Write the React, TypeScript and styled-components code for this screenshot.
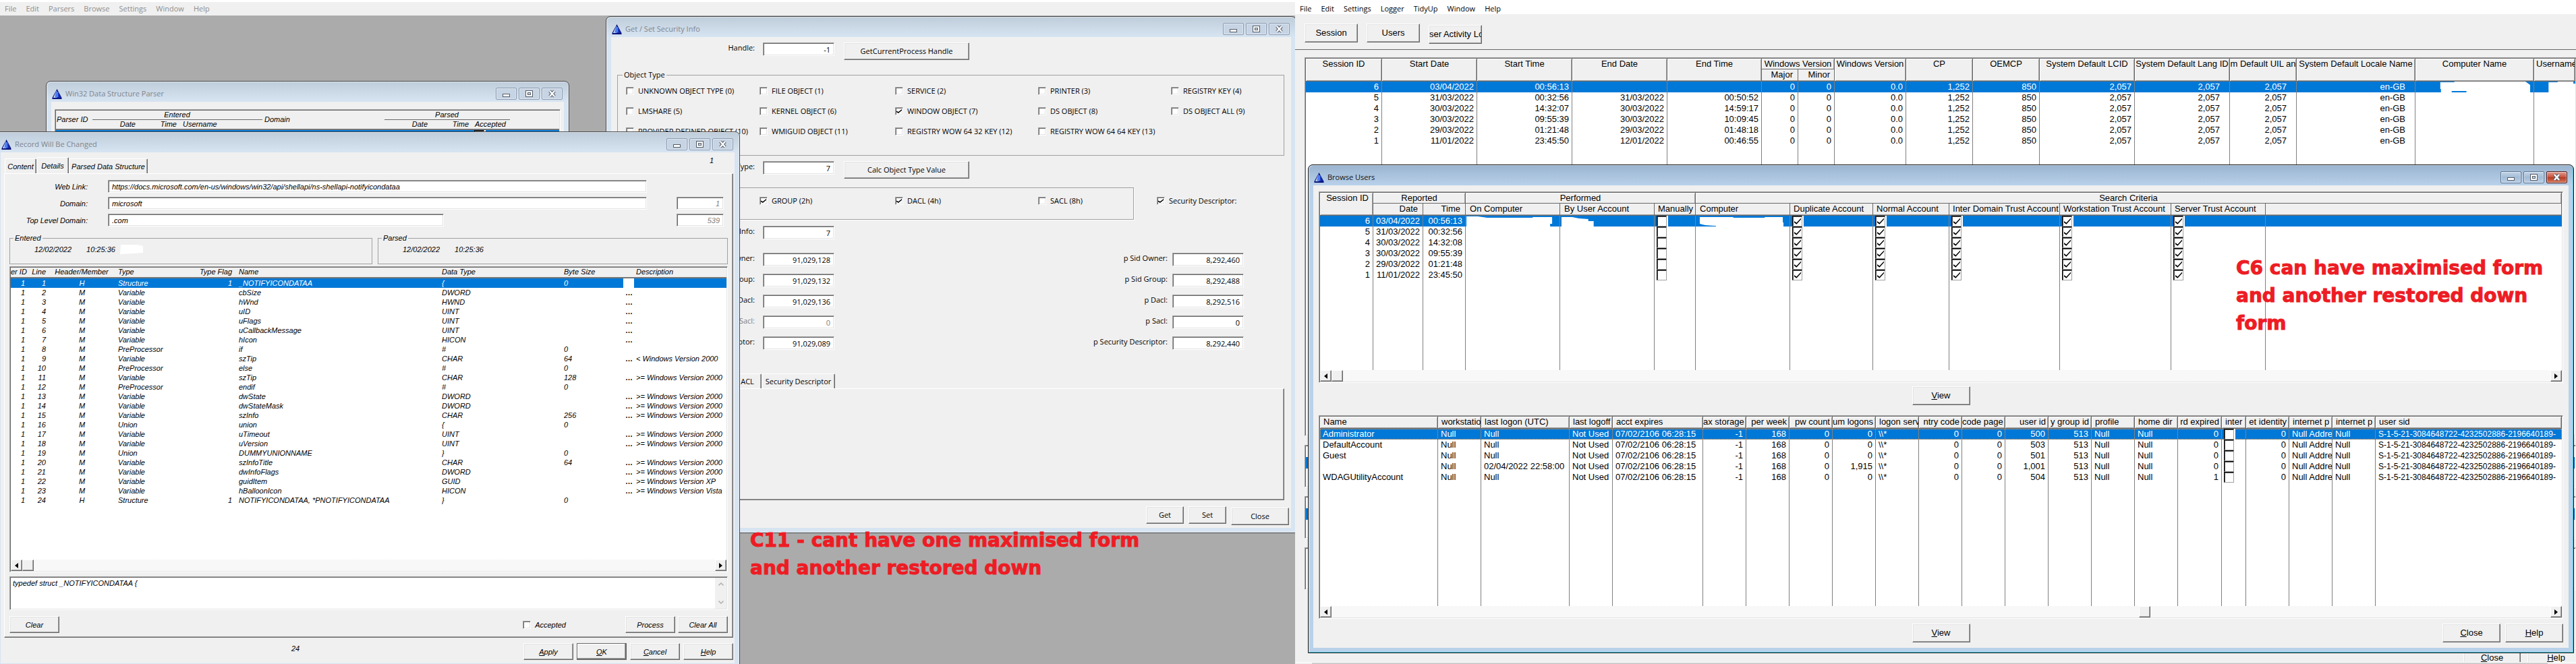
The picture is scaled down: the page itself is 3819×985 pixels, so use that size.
import React from "react";
import styled, { createGlobalStyle, css } from "styled-components";

const FACE = "#f0f0f0";
const DARK = "#696969";
const SHADE = "#a0a0a0";
const LIGHT = "#e3e3e3";
const BLUE = "#0078d7";
const UI = '"Open Sans", "Noto Sans", sans-serif';
const ARIAL = '"Liberation Sans", Arial, sans-serif';

const Global = createGlobalStyle`
  * { box-sizing: border-box; }
  body { margin: 0; background: ${FACE}; color: #000; overflow: hidden; }
  button, input, textarea { font: inherit; color: inherit; margin: 0; }
`;

const sunken = css`
  border: 1px solid;
  border-color: ${SHADE} #fff #fff ${SHADE};
  box-shadow: inset 1px 1px ${DARK}, inset -1px -1px ${LIGHT};
`;

const Screen = styled.div`
  display: grid;
  grid-template-columns: 1920fr 1899fr;
  grid-template-rows: minmax(0, 1fr);
  height: 100vh;
  overflow: hidden;
`;

const Pane = styled.section`
  position: relative;
  display: flex;
  flex-direction: column;
  min-width: 0;
  min-height: 0;
  overflow: hidden;
`;

const MenuBar = styled.nav<{ $dim?: boolean }>`
  display: flex;
  align-items: center;
  flex: none;
  height: ${(p) => (p.$dim ? 23 : 21)}px;
  border-top: ${(p) => (p.$dim ? "3px solid #fff" : "0")};
  padding-top: ${(p) => (p.$dim ? 0 : 4)}px;
  background: ${(p) => (p.$dim ? FACE : "#fff")};
  color: ${(p) => (p.$dim ? "#8e8e8e" : "#000")};
  font: 11px/16px ${UI};
`;

const MenuItem = styled.button`
  border: 0;
  background: none;
  padding: 0 7px;
`;

const Desktop = styled.div`
  position: relative;
  flex: 1;
  background: #ababab;
  overflow: hidden;
`;

/* ---------- window chrome ---------- */

const Frame = styled.article<{ $x: number; $y: number; $w: number; $h: number; $active?: boolean }>`
  position: absolute;
  left: ${(p) => p.$x}px;
  top: ${(p) => p.$y}px;
  width: ${(p) => p.$w}px;
  height: ${(p) => p.$h}px;
  display: flex;
  flex-direction: column;
  padding: 0 7px 7px;
  border: 1px solid ${(p) => (p.$active ? "#111" : "#4a4a4a")};
  border-radius: 7px 7px 0 0;
  background: ${(p) => (p.$active ? "linear-gradient(#9ab4d0, #b9d1ea 30px)" : "linear-gradient(#bfcddb, #d7e4f2 30px)")};
  box-shadow: inset 1px 1px rgba(255, 255, 255, 0.5), inset -1px -1px ${(p) => (p.$active ? "#45c8de" : "rgba(255,255,255,.4)")};
`;

const TitleBar = styled.header<{ $active?: boolean }>`
  display: flex;
  align-items: center;
  flex: none;
  height: 30px;
  padding: 6px 2px 0 1px;
  gap: 5px;
  color: ${(p) => (p.$active ? "#111" : "#80868c")};
`;

const Title = styled.h2`
  flex: 1;
  margin: 0;
  font: 11px/18px ${UI};
`;

const Controls = styled.div`
  display: flex;
  gap: 3px;
`;

const ControlButton = styled.button<{ $close?: boolean; $active?: boolean }>`
  display: grid;
  place-items: center;
  width: 31px;
  height: 18px;
  padding: 0;
  border: 1px solid ${(p) => (p.$close ? "#4f1d1d" : p.$active ? "#5e7690" : "#8b9bb0")};
  border-radius: 2px;
  background: ${(p) =>
    p.$close ? "linear-gradient(#e0a096, #c84f3a 50%, #b23a22 51%, #d8785c)" : p.$active ? "linear-gradient(#c3d5e8, #a3bcd6 50%, #b9cfe6)" : "#c6d4e4"};
  box-shadow: inset 0 0 0 1px rgba(255, 255, 255, 0.45);
`;

const Client = styled.div`
  display: flex;
  flex-direction: column;
  flex: 1;
  min-height: 0;
  background: ${FACE};
`;

const Logo = () => (
  <svg width="15" height="15" viewBox="0 0 15 15" aria-hidden="true">
    <path d="M7.5 0 L14.5 13 V15 H0.5 V13 Z" fill="#0a1478" />
    <path d="M7 2 L7 13 H2 Z" fill="#e4ecff" />
    <path d="M6 4 L9 4 L12.500 12.500 H4 Z" fill="#4a7cf0" />
    <path d="M9 5 L13.500 13 H9.500 Z" fill="#1428b0" />
  </svg>
);

const Glyph = ({ kind }: { kind: "min" | "max" | "close" }) => (
  <svg width="13" height="12" viewBox="0 0 13 12" aria-hidden="true">
    {kind === "min" && <rect x="1.500" y="6.500" width="10" height="4" fill="#fff" stroke="#555c68" />}
    {kind === "max" && (
      <>
        <rect x="1.500" y="1.500" width="10" height="9" fill="#fff" stroke="#555c68" />
        <rect x="4.500" y="4.500" width="4" height="3" fill="#c6d4e4" stroke="#555c68" />
      </>
    )}
    {kind === "close" && (
      <>
        <path d="M3 2 L10 10 M10 2 L3 10" stroke="#555c68" strokeWidth="4.500" />
        <path d="M3 2 L10 10 M10 2 L3 10" stroke="#fff" strokeWidth="2.500" />
      </>
    )}
  </svg>
);

type WinProps = { title: string; x: number; y: number; w: number; h: number; active?: boolean; children: React.ReactNode };
const Win = ({ title, x, y, w, h, active, children }: WinProps) => (
  <Frame $x={x} $y={y} $w={w} $h={h} $active={active}>
    <TitleBar $active={active}>
      <Logo />
      <Title>{title}</Title>
      <Controls>
        <ControlButton aria-label="Minimise" $active={active}><Glyph kind="min" /></ControlButton>
        <ControlButton aria-label="Restore" $active={active}><Glyph kind="max" /></ControlButton>
        <ControlButton aria-label="Close window" $close={active}><Glyph kind="close" /></ControlButton>
      </Controls>
    </TitleBar>
    {children}
  </Frame>
);

/* ---------- controls ---------- */

const Button = styled.button<{ $w: number; $h?: number; $default?: boolean; $low?: boolean }>`
  flex: none;
  width: ${(p) => p.$w}px;
  height: ${(p) => p.$h ?? 25}px;
  padding: 0;
  border: 1px solid;
  border-color: #fff ${DARK} ${DARK} #fff;
  background: ${FACE};
  box-shadow: inset -1px -1px ${SHADE}, inset 1px 1px ${LIGHT};
  overflow: hidden;
  white-space: nowrap;
  align-self: ${(p) => (p.$low ? "flex-end" : "flex-start")};
  ${(p) =>
    p.$default &&
    css`
      border-color: ${DARK};
      box-shadow: inset -1px -1px ${DARK}, inset -2px -2px ${SHADE}, inset 1px 1px #fff;
    `}
`;

const TextBox = styled.input<{ $w: number; $h?: number; $right?: boolean; $dim?: boolean }>`
  ${sunken}
  flex: none;
  width: ${(p) => p.$w}px;
  height: ${(p) => p.$h ?? 20}px;
  padding: 0 5px;
  background: #fff;
  color: ${(p) => (p.$dim ? "#808080" : "#000")};
  text-align: ${(p) => (p.$right ? "right" : "left")};
`;

const Tick = styled.input.attrs({ type: "checkbox" })<{ $cell?: boolean }>`
  ${sunken}
  appearance: none;
  display: block;
  position: relative;
  flex: none;
  width: ${(p) => (p.$cell ? 15 : 12)}px;
  height: ${(p) => (p.$cell ? 16 : 12)}px;
  background: #fff;
  ${(p) =>
    p.$cell &&
    css`
      border-color: #000 ${SHADE} ${SHADE} #000;
      box-shadow: inset 1px 1px #555, 2px 0 #fff;
    `}
  &:checked::before {
    content: "";
    position: absolute;
    inset: ${(p) => (p.$cell ? "2px 1px 2px 2px" : "2px 1px")};
    background: #000;
    clip-path: ${(p) =>
      p.$cell ? "polygon(0 50%, 34% 76%, 100% 4%, 100% 24%, 34% 98%, 0 72%)" : "polygon(0 42%, 36% 68%, 100% 0, 100% 30%, 36% 100%, 0 72%)"};
  }
`;

const CheckLabel = styled.label`
  display: flex;
  align-items: center;
  gap: 6px;
  height: 30px;
  white-space: nowrap;
`;

const Check = ({ text, on }: { text: string; on?: boolean }) => (
  <CheckLabel>
    <Tick defaultChecked={on} />
    {text}
  </CheckLabel>
);

const List = styled.div`
  ${sunken}
  padding: 1px;
  background: #fff;
  overflow: hidden;
`;

const Table = styled.table<{ $small?: boolean }>`
  width: 100%;
  table-layout: fixed;
  border-collapse: separate;
  border-spacing: 0;
  font: ${(p) => (p.$small ? `italic 11px/14px ${ARIAL}` : `13px/16px ${ARIAL}`)};
`;

type Align = "left" | "right" | "center";

const Th = styled.th<{ $a?: Align; $group?: boolean; $sub?: boolean; $h?: number; $pad?: number }>`
  height: ${(p) => p.$h ?? 17}px;
  padding: 0 ${(p) => (p.$a ? p.$pad ?? 4 : 0)}px 0 ${(p) => (p.$a === "right" ? 0 : p.$pad ?? 4)}px;
  background: ${FACE};
  font-weight: normal;
  line-height: 15px;
  text-align: ${(p) => p.$a ?? "left"};
  vertical-align: top;
  white-space: nowrap;
  overflow: hidden;
  border-right: 1px solid ${DARK};
  border-bottom: 1px solid ${DARK};
  box-shadow: ${(p) =>
    p.$sub ? `inset 0 -1px ${SHADE}` : p.$group ? `inset 1px 1px #fff, inset -1px 0 ${SHADE}` : `inset 1px 1px #fff, inset -1px -1px ${SHADE}`};
`;

const PlainTh = styled.th<{ $a?: Align; $line?: boolean; $last?: boolean; $mid?: boolean; $left?: number; $right?: number; $h?: number }>`
  height: ${(p) => p.$h ?? 14}px;
  padding: 0 ${(p) => p.$right ?? 4}px 0 ${(p) => p.$left ?? 3}px;
  background: ${FACE};
  font-weight: normal;
  line-height: 13px;
  text-align: ${(p) => p.$a ?? "left"};
  vertical-align: ${(p) => (p.$mid ? "middle" : "top")};
  white-space: nowrap;
  overflow: hidden;
  border-bottom: ${(p) => (p.$line ? `1px solid ${DARK}` : p.$last ? `2px solid #777` : "0")};
`;

const Td = styled.td<{ $a?: Align; $pad?: number; $left?: number; $line?: boolean; $h?: number }>`
  position: relative;
  height: ${(p) => p.$h ?? 16}px;
  padding: 0 ${(p) => p.$pad ?? 4}px 0 ${(p) => p.$left ?? 4}px;
  border-right: ${(p) => (p.$line ? "1px solid #808080" : "0")};
  text-align: ${(p) => p.$a ?? "left"};
  white-space: nowrap;
  overflow: hidden;
`;

const LongTd = styled(Td)`
  font-size: 12px;
`;

const Tr = styled.tr<{ $on?: boolean; $focus?: boolean }>`
  background: ${(p) => (p.$on ? BLUE : "transparent")};
  color: ${(p) => (p.$on ? "#fff" : "#000")};
  ${(p) => p.$focus && "outline: 1px dotted #ff9a3c; outline-offset: -1px;"}
`;

const Blot = styled.svg`
  position: absolute;
  left: 0;
  top: 0;
  width: 100%;
  height: 16px;
`;

const ScrollTrack = styled.div`
  display: flex;
  height: 17px;
  background: repeating-conic-gradient(#fff 0 25%, #f1f1f1 0 50%) 0 0 / 2px 2px;
`;

const ScrollKey = styled.button`
  display: grid;
  place-items: center;
  width: 17px;
  height: 17px;
  padding: 0;
  border: 1px solid;
  border-color: #fff ${DARK} ${DARK} #fff;
  background: ${FACE};
  box-shadow: inset -1px -1px ${SHADE};
`;

const Track = styled.div<{ $before: number }>`
  flex: 1;
  padding-left: ${(p) => p.$before}%;
`;

const Scroll = ({ at = 0 }: { at?: number }) => (
  <ScrollTrack>
    <ScrollKey aria-label="Scroll left">
      <svg width="5" height="8" viewBox="0 0 5 8"><path d="M5 0 V8 L0 4 Z" /></svg>
    </ScrollKey>
    <Track $before={at}><ScrollKey as="div" /></Track>
    <ScrollKey aria-label="Scroll right">
      <svg width="5" height="8" viewBox="0 0 5 8"><path d="M0 0 V8 L5 4 Z" /></svg>
    </ScrollKey>
  </ScrollTrack>
);

const Note = styled.p<{ $x: number; $y: number; $w: number }>`
  position: absolute;
  left: ${(p) => p.$x}px;
  top: ${(p) => p.$y}px;
  width: ${(p) => p.$w}px;
  margin: 0;
  color: #ed1c24;
  font: bold 28px/41px "DejaVu Sans", sans-serif;
  -webkit-text-stroke: 1px #ed1c24;
`;

const Cols = ({ widths }: { widths: (number | undefined)[] }) => (
  <colgroup>{widths.map((w, i) => <col key={i} width={w} />)}</colgroup>
);

const Filler = ({ count, height, line }: { count: number; height: number; line?: boolean }) => (
  <tr aria-hidden="true">{Array.from({ length: count }, (_, i) => <Td key={i} $h={height} $line={line && i < count - 1} />)}</tr>
);

/* ---------- Win32 Data Structure Parser ---------- */

const ParserBody = styled(Client)`
  padding: 11px 5px 0;
`;

const ParserWindow = () => (
  <Win title="Win32 Data Structure Parser" x={68} y={97} w={776} h={300}>
    <ParserBody>
      <List>
        <Table $small>
          <Cols widths={[54, 68, 61, 123, 181, 68, 61, 57, undefined]} />
          <thead>
            <tr>
              <PlainTh rowSpan={2} $last $mid $left={1} $right={0}>Parser ID</PlainTh>
              <PlainTh colSpan={3} $a="center" $line>Entered</PlainTh>
              <PlainTh rowSpan={2} $last $mid>Domain</PlainTh>
              <PlainTh colSpan={3} $a="center" $line>Parsed</PlainTh>
              <PlainTh rowSpan={2} $last />
            </tr>
            <tr>
              <PlainTh $a="right" $last>Date</PlainTh>
              <PlainTh $a="right" $last>Time</PlainTh>
              <PlainTh $last $left={5}>Username</PlainTh>
              <PlainTh $a="right" $last>Date</PlainTh>
              <PlainTh $a="right" $last>Time</PlainTh>
              <PlainTh $last $left={5}>Accepted</PlainTh>
            </tr>
          </thead>
          <tbody>
            <Tr $on>{Array.from({ length: 9 }, (_, i) => <Td key={i}>{i === 7 && <Tick $cell aria-label="Accepted" />}</Td>)}</Tr>
          </tbody>
        </Table>
      </List>
    </ParserBody>
  </Win>
);

/* ---------- Get / Set Security Info ---------- */

const SecurityBody = styled(Client)`
  padding: 8px 10px 0 9px;
  font: 11px/16px ${UI};
`;

const Line = styled.div<{ $top?: number }>`
  display: flex;
  align-items: flex-start;
  margin-top: ${(p) => p.$top ?? 0}px;
`;

const Caption = styled.label<{ $w: number; $gap: number; $dim?: boolean }>`
  flex: none;
  width: ${(p) => p.$w}px;
  margin-right: ${(p) => p.$gap}px;
  text-align: right;
  color: ${(p) => (p.$dim ? "#808080" : "inherit")};
`;

const Group = styled.fieldset<{ $h: number }>`
  min-width: 0;
  height: ${(p) => p.$h}px;
  margin: 0;
  padding: 0 0 0 12px;
  border: 1px solid ${SHADE};
`;

const Legend = styled.legend`
  margin-left: -5px;
  padding: 0 2px;
`;

const ObjectGroup = styled(Group)`
  margin-top: 14px;
`;

const InfoGroup = styled(Group)`
  width: 766px;
  margin-right: 34px;
  box-shadow: 1px 1px #fff;
`;

const CheckGrid = styled.div<{ $skip?: boolean }>`
  display: grid;
  grid-template-columns: 198px 201px 212px 197px 1fr;
  padding-top: ${(p) => (p.$skip ? 4 : 1)}px;
  & > :first-child {
    grid-column-start: ${(p) => (p.$skip ? 2 : 1)};
  }
`;

const SideCheck = styled.div`
  padding-top: 5px;
`;

const CommandButton = styled(Button)`
  margin-left: 14px;
`;

const TabRow = styled.div<{ $x: number; $top: number }>`
  display: flex;
  align-items: flex-end;
  padding-left: ${(p) => p.$x}px;
  margin-top: ${(p) => p.$top}px;
`;

const Tab = styled.button<{ $w: number; $on?: boolean }>`
  width: ${(p) => p.$w}px;
  height: ${(p) => (p.$on ? 24 : 22)}px;
  padding: 0;
  border: 1px solid;
  border-color: #fff ${DARK} transparent #fff;
  border-bottom: 0;
  border-radius: 2px 2px 0 0;
  background: ${FACE};
  box-shadow: inset -1px 0 ${SHADE};
  white-space: nowrap;
`;

const TabSheet = styled.div<{ $h?: number }>`
  height: ${(p) => (p.$h ? `${p.$h}px` : "auto")};
  border: 1px solid;
  border-color: #fff ${DARK} ${DARK} #fff;
  box-shadow: inset -1px -1px ${SHADE};
`;

const Commands = styled.div`
  display: flex;
  justify-content: flex-end;
  gap: 7px;
  height: 28px;
  margin: 9px -7px 0 0;
`;

const pointers: [string, string, string, string, boolean?][] = [
  ["pp Sid Owner:", "91,029,128", "p Sid Owner:", "8,292,460"],
  ["pp Sid Group:", "91,029,132", "p Sid Group:", "8,292,488"],
  ["pp Dacl:", "91,029,136", "p Dacl:", "8,292,516"],
  ["pp Sacl:", "0", "p Sacl:", "0", true],
  ["pp Security Descriptor:", "91,029,089", "p Security Descriptor:", "8,292,440"],
];

const objectTypes = [
  "UNKNOWN OBJECT TYPE (0)", "FILE OBJECT (1)", "SERVICE (2)", "PRINTER (3)", "REGISTRY KEY (4)",
  "LMSHARE (5)", "KERNEL OBJECT (6)", "WINDOW OBJECT (7)", "DS OBJECT (8)", "DS OBJECT ALL (9)",
  "PROVIDER DEFINED OBJECT (10)", "WMIGUID OBJECT (11)", "REGISTRY WOW 64 32 KEY (12)", "REGISTRY WOW 64 64 KEY (13)",
];

const SecurityWindow = () => (
  <Win title="Get / Set Security Info" x={898} y={1} w={1024} h={767}>
    <SecurityBody>
      <Line>
        <Caption htmlFor="handle" $w={204} $gap={12}>Handle:</Caption>
        <TextBox id="handle" $w={106} $right defaultValue="-1" />
        <CommandButton $w={186} $h={26}>GetCurrentProcess Handle</CommandButton>
      </Line>
      <ObjectGroup $h={128}>
        <Legend>Object Type</Legend>
        <CheckGrid>{objectTypes.map((t, i) => <Check key={t} text={t} on={i === 7} />)}</CheckGrid>
      </ObjectGroup>
      <Line $top={8}>
        <Caption htmlFor="otype" $w={204} $gap={12}>Object Type:</Caption>
        <TextBox id="otype" $w={106} $right defaultValue="7" />
        <CommandButton $w={186} $h={26}>Calc Object Type Value</CommandButton>
      </Line>
      <Line $top={13}>
        <InfoGroup $h={48} aria-label="Security info">
          <CheckGrid $skip>
            <Check text="GROUP (2h)" on />
            <Check text="DACL (4h)" on />
            <Check text="SACL (8h)" />
          </CheckGrid>
        </InfoGroup>
        <SideCheck><Check text="Security Descriptor:" on /></SideCheck>
      </Line>
      <Line $top={9}>
        <Caption htmlFor="sinfo" $w={204} $gap={12}>Security Info:</Caption>
        <TextBox id="sinfo" $w={106} $right defaultValue="7" />
      </Line>
      <Line $top={9} />
      {pointers.map(([a, av, b, bv, dim]) => (
        <Line key={a} $top={11}>
          <Caption htmlFor={a} $w={204} $gap={12} $dim={dim}>{a}</Caption>
          <TextBox id={a} $w={106} $right $dim={dim} defaultValue={av} />
          <Caption htmlFor={b} $w={494} $gap={7}>{b}</Caption>
          <TextBox id={b} $w={106} $right defaultValue={bv} />
        </Line>
      ))}
      <TabRow $x={172} $top={35}>
        <Tab $w={42}>ACL</Tab>
        <Tab $w={109}>Security Descriptor</Tab>
      </TabRow>
      <TabSheet $h={166} />
      <Commands>
        <Button $w={56} $h={26}>Get</Button>
        <Button $w={56} $h={26}>Set</Button>
        <Button $w={86} $h={26} $low>Close</Button>
      </Commands>
    </SecurityBody>
  </Win>
);

/* ---------- Record Will Be Changed ---------- */

const RecordBody = styled(Client)`
  padding: 0 2px 5px 5px;
  font: italic 11px/16px ${ARIAL};
`;

const RecordTabs = styled.div`
  display: flex;
  align-items: flex-end;
  height: 31px;
  padding-left: 1px;
`;

const Counter = styled.output`
  flex: 1;
  height: 27px;
  padding-right: 29px;
  text-align: right;
`;

const Sheet = styled(TabSheet)`
  display: flex;
  flex-direction: column;
  height: 689px;
  padding: 9px 7px 0;
`;

const FieldRow = styled.div`
  display: flex;
  align-items: center;
  margin-bottom: 6px;
`;

const SideBox = styled(TextBox)`
  margin-left: 44px;
`;

const TldSide = styled(TextBox)`
  margin-left: 345px;
`;

const Stamps = styled.div`
  display: grid;
  grid-template-columns: 538px 1fr;
  gap: 8px;
  margin: 4px 0 3px;
  line-height: 14px;
`;

const StampGroup = styled(Group)`
  padding: 3px 0 0 36px;
  & > legend {
    margin-left: -31px;
  }
`;

const StampRow = styled.div`
  display: flex;
  gap: 22px;
`;

const Smudge = styled.svg`
  margin-left: -15px;
`;

const CodeBox = styled.div`
  ${sunken}
  display: flex;
  flex: none;
  height: 50px;
  margin-top: 6px;
  padding: 1px;
  background: #fff;
`;

const Code = styled.textarea`
  flex: 1;
  padding: 0 3px;
  border: 0;
  resize: none;
  outline: 0;
  background: none;
`;

const MiniBar = styled.div`
  display: flex;
  flex-direction: column;
  justify-content: space-between;
  align-items: center;
  width: 17px;
  padding: 7px 0;
  background: ${FACE};
`;

const ActionRow = styled.div`
  display: flex;
  align-items: center;
  gap: 4px;
  margin-top: 9px;
`;

const AcceptSlot = styled.div`
  flex: 1;
  display: flex;
  height: 24px;
  align-items: center;
  justify-content: flex-end;
  padding-right: 84px;
`;

const RecordFooter = styled.footer`
  display: flex;
  gap: 5px;
  margin-top: 8px;
`;

const Total = styled.output`
  flex: 1;
  padding-left: 426px;
`;

type Member = [string, string, string, string?, string?];
const v = "Windows Version";
const members: Member[] = [
  ["Structure", "_NOTIFYICONDATAA", "{", "0"],
  ["Variable", "cbSize", "DWORD", "", ""],
  ["Variable", "hWnd", "HWND", "", ""],
  ["Variable", "uID", "UINT", "", ""],
  ["Variable", "uFlags", "UINT", "", ""],
  ["Variable", "uCallbackMessage", "UINT", "", ""],
  ["Variable", "hIcon", "HICON", "", ""],
  ["PreProcessor", "if", "#", "0"],
  ["Variable", "szTip", "CHAR", "64", `< ${v} 2000`],
  ["PreProcessor", "else", "#", "0"],
  ["Variable", "szTip", "CHAR", "128", `>= ${v} 2000`],
  ["PreProcessor", "endif", "#", "0"],
  ["Variable", "dwState", "DWORD", "", `>= ${v} 2000`],
  ["Variable", "dwStateMask", "DWORD", "", `>= ${v} 2000`],
  ["Variable", "szInfo", "CHAR", "256", `>= ${v} 2000`],
  ["Union", "union", "{", "0"],
  ["Variable", "uTimeout", "UINT", "", `>= ${v} 2000`],
  ["Variable", "uVersion", "UINT", "", `>= ${v} 2000`],
  ["Union", "DUMMYUNIONNAME", "}", "0"],
  ["Variable", "szInfoTitle", "CHAR", "64", `>= ${v} 2000`],
  ["Variable", "dwInfoFlags", "DWORD", "", `>= ${v} 2000`],
  ["Variable", "guidItem", "GUID", "", `>= ${v} XP`],
  ["Variable", "hBalloonIcon", "HICON", "", `>= ${v} Vista`],
  ["Structure", "NOTIFYICONDATAA, *PNOTIFYICONDATAA", "}", "0"],
];

const WhiteCell = styled.td`
  background: #fff;
`;

const DotsCell = styled(Td)`
  font-weight: bold;
  font-style: normal;
`;

const HeadPair = styled.div`
  display: flex;
  justify-content: space-between;
`;

const MemberTable = () => (
  <Table $small>
    <Cols widths={[25, 31, 99, 183, 301, 181, 88, 16, undefined]} />
    <thead>
      <tr>
        <PlainTh $h={16} $last $a="right" $left={0} $right={2}>er ID</PlainTh>
        <PlainTh $h={16} $last $a="right">Line</PlainTh>
        <PlainTh $h={16} $last $a="center">Header/Member</PlainTh>
        <PlainTh $h={16} $last $left={4} $right={10}>
          <HeadPair><span>Type</span><span>Type Flag</span></HeadPair>
        </PlainTh>
        <PlainTh $h={16} $last $left={0}>Name</PlainTh>
        <PlainTh $h={16} $last $left={0}>Data Type</PlainTh>
        <PlainTh $h={16} $last $left={0}>Byte Size</PlainTh>
        <PlainTh $h={16} $last />
        <PlainTh $h={16} $last>Description</PlainTh>
      </tr>
    </thead>
    <tbody>
      {members.map(([type, name, data, size, desc], i) => {
        const head = type === "Structure";
        return (
          <Tr key={i} $on={i === 0}>
            <Td $h={14} $a="right">1</Td>
            <Td $h={14} $a="right">{i + 1}</Td>
            <Td $h={14} $a="center">{head ? "H" : "M"}</Td>
            <Td $h={14} $pad={10}>
              <HeadPair><span>{type}</span><span>{head ? "1" : ""}</span></HeadPair>
            </Td>
            <Td $h={14} $left={0}>{name}</Td>
            <Td $h={14} $left={0}>{data}</Td>
            <Td $h={14} $left={0}>{size}</Td>
            {i === 0 ? <WhiteCell /> : <DotsCell $h={14} $left={3} $pad={0}>{desc === undefined ? "" : "…"}</DotsCell>}
            <Td $h={14} $left={3} $pad={0}>{desc}</Td>
          </Tr>
        );
      })}
      <Filler count={9} height={81} />
    </tbody>
  </Table>
);

const RecordWindow = () => (
  <Win title="Record Will Be Changed" x={-7} y={172} w={1104} h={797}>
    <RecordBody>
      <RecordTabs>
        <Tab $w={47}>Content</Tab>
        <Tab $w={48} $on>Details</Tab>
        <Tab $w={117}>Parsed Data Structure</Tab>
        <Counter>1</Counter>
      </RecordTabs>
      <Sheet>
        <FieldRow>
          <Caption htmlFor="link" $w={116} $gap={30}>Web Link:</Caption>
          <TextBox id="link" $w={799} $h={19} defaultValue="https://docs.microsoft.com/en-us/windows/win32/api/shellapi/ns-shellapi-notifyicondataa" />
        </FieldRow>
        <FieldRow>
          <Caption htmlFor="domain" $w={116} $gap={30}>Domain:</Caption>
          <TextBox id="domain" $w={799} $h={19} defaultValue="microsoft" />
          <SideBox aria-label="Domain ID" $w={70} $h={19} $right $dim defaultValue="1" />
        </FieldRow>
        <FieldRow>
          <Caption htmlFor="tld" $w={116} $gap={30}>Top Level Domain:</Caption>
          <TextBox id="tld" $w={498} $h={19} defaultValue=".com" />
          <TldSide aria-label="Top level domain ID" $w={70} $h={19} $right $dim defaultValue="539" />
        </FieldRow>
        <Stamps>
          <StampGroup $h={46}>
            <Legend>Entered</Legend>
            <StampRow>
              <span>12/02/2022</span>
              <span>10:25:36</span>
              <Smudge width="36" height="14" viewBox="0 0 36 14" aria-hidden="true"><path d="M1 0 H26 L34 2 V12 L20 13 L0 14 Z" fill="#fff" /></Smudge>
            </StampRow>
          </StampGroup>
          <StampGroup $h={46}>
            <Legend>Parsed</Legend>
            <StampRow><span>12/02/2022</span><span>10:25:36</span></StampRow>
          </StampGroup>
        </Stamps>
        <List>
          <MemberTable />
          <Scroll />
        </List>
        <CodeBox>
          <Code aria-label="Source line" defaultValue="typedef struct _NOTIFYICONDATAA {" />
          <MiniBar aria-hidden="true">
            <svg width="8" height="5" viewBox="0 0 8 5"><path d="M0.500 4.500 L4 1 L7.500 4.500" stroke="#b4b4b4" strokeWidth="1.600" fill="none" /></svg>
            <svg width="8" height="5" viewBox="0 0 8 5"><path d="M0.500 0.500 L4 4 L7.500 0.500" stroke="#b4b4b4" strokeWidth="1.600" fill="none" /></svg>
          </MiniBar>
        </CodeBox>
        <ActionRow>
          <Button $w={74}>Clear</Button>
          <AcceptSlot><Check text="Accepted" /></AcceptSlot>
          <Button $w={74}>Process</Button>
          <Button $w={74}>Clear All</Button>
        </ActionRow>
      </Sheet>
      <RecordFooter>
        <Total>24</Total>
        <Button $w={74}><u>A</u>pply</Button>
        <Button $w={74} $default><u>O</u>K</Button>
        <Button $w={74}><u>C</u>ancel</Button>
        <Button $w={74}><u>H</u>elp</Button>
      </RecordFooter>
    </RecordBody>
  </Win>
);

/* ---------- right application ---------- */

const Toolbar = styled.div`
  display: flex;
  gap: 13px;
  flex: none;
  height: 53px;
  padding: 14px 14px 8px;
  border-bottom: 1px solid ${DARK};
  background: ${FACE};
  font: 13px/16px ${ARIAL};
`;

const Workspace = styled.main`
  flex: 1;
  display: flex;
  flex-direction: column;
  gap: 13px;
  min-height: 0;
  padding: 11px 0 0 14px;
  background: ${FACE};
  overflow: hidden;
`;

const SessionList = styled(List)`
  flex: none;
  border-right: 0;
`;

const StubList = styled(List)`
  flex: none;
  height: 63px;
  padding-top: 17px;
`;

const StubRow = styled.div<{ $on?: boolean }>`
  height: 17px;
  background: ${(p) => (p.$on ? BLUE : "#fff")};
`;

const PaneFooter = styled.footer`
  display: flex;
  justify-content: flex-end;
  gap: 10px;
  flex: none;
  height: 20px;
  margin-right: -13px;
  background: ${FACE};
  font: 13px/16px ${ARIAL};
  overflow: hidden;
`;

const BottomBar = styled.div`
  flex: none;
  height: 3px;
  padding: 0 42px 0 25px;
  border-top: 1px solid #fff;
  background: ${FACE};
`;

const BottomThumb = styled.div`
  height: 2px;
  background: #cdcdcd;
`;

const sessions = [
  ["6", "03/04/2022", "00:56:13", "", ""],
  ["5", "31/03/2022", "00:32:56", "31/03/2022", "00:50:52"],
  ["4", "30/03/2022", "14:32:07", "30/03/2022", "14:59:17"],
  ["3", "30/03/2022", "09:55:39", "30/03/2022", "10:09:45"],
  ["2", "29/03/2022", "01:21:48", "29/03/2022", "01:48:18"],
  ["1", "11/01/2022", "23:45:50", "12/01/2022", "00:46:55"],
];

const SessionTable = () => (
  <Table>
    <Cols widths={[113, 141, 141, 141, 140, 54, 54, 106, 99, 99, 141, 141, 99, 176, 176, undefined]} />
    <thead>
      <tr>
        {["Session ID", "Start Date", "Start Time", "End Date", "End Time"].map((t) => <Th key={t} rowSpan={2} $a="center">{t}</Th>)}
        <Th colSpan={2} $a="center" $group $h={16} $pad={0}>Windows Version</Th>
        <Th rowSpan={2} $a="center" $pad={0}>Windows Version</Th>
        <Th rowSpan={2} $a="center">CP</Th>
        <Th rowSpan={2} $a="center">OEMCP</Th>
        <Th rowSpan={2} $a="center">System Default LCID</Th>
        <Th rowSpan={2} $a="center" $pad={0}>System Default Lang ID</Th>
        <Th rowSpan={2} $a="center" $pad={0}>m Default UIL an</Th>
        <Th rowSpan={2} $a="center" $pad={2}>System Default Locale Name</Th>
        <Th rowSpan={2} $a="center">Computer Name</Th>
        <Th rowSpan={2} $pad={3}>Username</Th>
      </tr>
      <tr>
        <Th $sub $a="right" $h={18} $pad={7}>Major</Th>
        <Th $sub $a="right" $h={18} $pad={6}>Minor</Th>
      </tr>
    </thead>
    <tbody>
      {sessions.map((s, i) => (
        <Tr key={s[0]} $on={i === 0}>
          {s.map((t, j) => <Td key={j} $a="right" $line>{t}</Td>)}
          <Td $a="right" $line>0</Td>
          <Td $a="right" $line>0</Td>
          <Td $a="right" $line>0.0</Td>
          <Td $a="right" $line>1,252</Td>
          <Td $a="right" $line>850</Td>
          <Td $a="right" $line>2,057</Td>
          <Td $a="right" $line $pad={14}>2,057</Td>
          <Td $a="right" $line $pad={14}>2,057</Td>
          <Td $a="right" $line $pad={14}>en-GB</Td>
          <Td $line>
            {i === 0 && <Blot viewBox="0 0 176 16" preserveAspectRatio="none" aria-hidden="true"><path d="M37 1 H58 V0 H164 L171 5 V16 H76 V14 H54 V16 H38 V11 H37 Z" fill="#fff" /></Blot>}
          </Td>
          <Td>
            {i === 0 && <Blot viewBox="0 0 63 16" preserveAspectRatio="none" aria-hidden="true"><path d="M22 1 H36 V0 H60 V3 H63 V16 H22 Z" fill="#fff" /></Blot>}
          </Td>
        </Tr>
      ))}
      <Filler count={16} height={428} line />
    </tbody>
  </Table>
);

const BrowseBody = styled(Client)`
  padding: 9px 8px 8px;
  font: 13px/16px ${ARIAL};
`;

const ViewRow = styled.div<{ $top: number }>`
  display: grid;
  grid-template-columns: 1fr 86px 1fr;
  margin-top: ${(p) => p.$top}px;
`;

const EndButtons = styled.div`
  display: flex;
  justify-content: flex-end;
  gap: 7px;
`;

const SecondList = styled(List)`
  margin-top: 15px;
`;

const users = [
  ["6", "03/04/2022", "00:56:13"],
  ["5", "31/03/2022", "00:32:56"],
  ["4", "30/03/2022", "14:32:08"],
  ["3", "30/03/2022", "09:55:39"],
  ["2", "29/03/2022", "01:21:48"],
  ["1", "11/01/2022", "23:45:50"],
];

const trusts = ["Duplicate Account", "Normal Account", "Inter Domain Trust Account", "Workstation Trust Account", "Server Trust Account"];

const BrowseTable = () => (
  <Table>
    <Cols widths={[79, 74, 63, 140, 140, 61, 140, 123, 113, 164, 165, 140, undefined]} />
    <thead>
      <tr>
        <Th rowSpan={2} $a="right" $pad={6}>Session ID</Th>
        <Th colSpan={2} $group $a="center" $h={16}>Reported</Th>
        <Th colSpan={3} $group $a="center" $h={16}>Performed</Th>
        <Th colSpan={7} $group $a="center" $h={16}>Search Criteria</Th>
      </tr>
      <tr>
        <Th $sub $a="right" $h={18} $pad={7}>Date</Th>
        <Th $sub $a="right" $h={18} $pad={7}>Time</Th>
        <Th $sub $h={18} $pad={6}>On Computer</Th>
        <Th $sub $h={18} $pad={6}>By User Account</Th>
        <Th $sub $h={18} $pad={5}>Manually</Th>
        <Th $sub $h={18} $pad={6}>Computer</Th>
        {trusts.map((t) => <Th key={t} $sub $h={18} $pad={5}>{t}</Th>)}
        <Th $sub $h={18} />
      </tr>
    </thead>
    <tbody>
      {users.map((u, i) => (
        <Tr key={u[0]} $on={i === 0}>
          {u.map((t, j) => <Td key={j} $a="right" $line>{t}</Td>)}
          <Td $line>{i === 0 && <Blot viewBox="0 0 140 16" preserveAspectRatio="none" aria-hidden="true"><path d="M1 1 H18 L32 3 H100 V2 H129 V12 H126 V16 H1 Z" fill="#fff" /></Blot>}</Td>
          <Td $line>{i === 0 && <Blot viewBox="0 0 140 16" preserveAspectRatio="none" aria-hidden="true"><path d="M2 2 H18 L28 4 L42 5 V8 H50 V16 H2 Z" fill="#fff" /></Blot>}</Td>
          <Td $line $left={3}><Tick $cell aria-label="Manually" /></Td>
          <Td $line>{i === 0 && <Blot viewBox="0 0 140 16" preserveAspectRatio="none" aria-hidden="true"><path d="M6 2 H56 V3 H103 V2 H130 V10 H131 V16 H30 V15 L14 14 L6 12 Z" fill="#fff" /></Blot>}</Td>
          {trusts.map((t) => <Td key={t} $line $left={3}><Tick $cell defaultChecked aria-label={t} /></Td>)}
          <Td />
        </Tr>
      ))}
      <Filler count={13} height={133} line />
    </tbody>
  </Table>
);

type Col = [string, number | undefined, Align, string?];
const accountCols: Col[] = [
  ["Name", 175, "left"],
  ["workstatio", 64, "left", "Null"],
  ["last logon (UTC)", 131, "left"],
  ["last logoff", 64, "left", "Not Used"],
  ["acct expires", 134, "left", "07/02/2106 06:28:15"],
  ["ax storage", 64, "right", "-1"],
  ["per week", 64, "right", "168"],
  ["pw count", 64, "right", "0"],
  ["um logons", 64, "right"],
  ["logon serv", 64, "left", "\\\\*"],
  ["ntry code", 64, "right", "0"],
  ["code page", 64, "right", "0"],
  ["user id", 64, "right"],
  ["y group id", 64, "right", "513"],
  ["profile", 64, "left", "Null"],
  ["home dir", 64, "left", "Null"],
  ["rd expired", 65, "right"],
  ["inter", 36, "left"],
  ["et identity", 64, "right", "0"],
  ["internet p", 64, "left", "Null Addre"],
  ["internet p", 64, "left", "Null"],
  ["user sid", undefined, "left", "S-1-5-21-3084648722-4232502886-2196640189-"],
];

const accounts: Record<number, string>[] = [
  { 0: "Administrator", 2: "Null", 8: "0", 12: "500", 16: "0" },
  { 0: "DefaultAccount", 2: "Null", 8: "0", 12: "503", 16: "0" },
  { 0: "Guest", 2: "Null", 8: "0", 12: "501", 16: "0" },
  { 0: "", 2: "02/04/2022 22:58:00", 8: "1,915", 12: "1,001", 16: "0" },
  { 0: "WDAGUtilityAccount", 2: "Null", 8: "0", 12: "504", 16: "1" },
];

const AccountTable = () => (
  <Table>
    <Cols widths={accountCols.map((c) => c[1])} />
    <thead>
      <tr>
        {accountCols.map(([t, , a], i) => (
          <Th key={i} $a={a === "left" ? undefined : a} $h={18} $pad={a === "left" ? 5 : 3}>{t}</Th>
        ))}
      </tr>
    </thead>
    <tbody>
      {accounts.map((row, i) => (
        <Tr key={i} $on={i === 0} $focus={i === 0}>
          {accountCols.map(([, , a, value], j) => {
            if (j === 17) return <Td key={j} $line $left={3}><Tick $cell aria-label="internet" /></Td>;
            if (j === 21) return <LongTd key={j} $pad={0}>{value}</LongTd>;
            return <Td key={j} $a={a} $pad={a === "left" ? 0 : 4} $left={a === "left" ? 4 : 0} $line>{value ?? row[j]}</Td>;
          })}
        </Tr>
      ))}
      <Filler count={22} height={183} line />
    </tbody>
  </Table>
);

const BrowseWindow = () => (
  <Win title="Browse Users" x={19} y={244} w={1877} h={725} active>
    <BrowseBody>
      <List>
        <BrowseTable />
        <Scroll />
      </List>
      <ViewRow $top={5}>
        <span />
        <Button $w={86} $h={28}><u>V</u>iew</Button>
      </ViewRow>
      <SecondList>
        <AccountTable />
        <Scroll at={65} />
      </SecondList>
      <ViewRow $top={7}>
        <span />
        <Button $w={86} $h={28}><u>V</u>iew</Button>
        <EndButtons>
          <Button $w={86} $h={28}><u>C</u>lose</Button>
          <Button $w={86} $h={28}><u>H</u>elp</Button>
        </EndButtons>
      </ViewRow>
    </BrowseBody>
  </Win>
);

const Menu = ({ items, dim }: { items: string[]; dim?: boolean }) => (
  <MenuBar $dim={dim}>{items.map((t) => <MenuItem key={t}>{t}</MenuItem>)}</MenuBar>
);

export default function App() {
  return (
    <>
      <Global />
      <Screen>
        <Pane>
          <Menu dim items={["File", "Edit", "Parsers", "Browse", "Settings", "Window", "Help"]} />
          <Desktop>
            <ParserWindow />
            <SecurityWindow />
            <RecordWindow />
            <Note $x={1112} $y={758} $w={640}>C11 - cant have one maximised form and another restored down</Note>
          </Desktop>
        </Pane>
        <Pane>
          <Menu items={["File", "Edit", "Settings", "Logger", "TidyUp", "Window", "Help"]} />
          <Toolbar>
            <Button $w={79} $h={28}>Session</Button>
            <Button $w={79} $h={28}>Users</Button>
            <Button $w={79} $h={28} $low>ser Activity Lo</Button>
          </Toolbar>
          <Workspace>
            <SessionList><SessionTable /></SessionList>
            <StubList><StubRow $on /></StubList>
            <StubList><StubRow $on /></StubList>
            <StubList><StubRow /></StubList>
          </Workspace>
          <PaneFooter>
            <Button $w={85} $h={28}><u>C</u>lose</Button>
            <Button $w={85} $h={28}><u>H</u>elp</Button>
          </PaneFooter>
          <BottomBar><BottomThumb /></BottomBar>
          <BrowseWindow />
          <Note $x={1395} $y={377} $w={480}>C6 can have maximised form and another restored down form</Note>
        </Pane>
      </Screen>
    </>
  );
}
